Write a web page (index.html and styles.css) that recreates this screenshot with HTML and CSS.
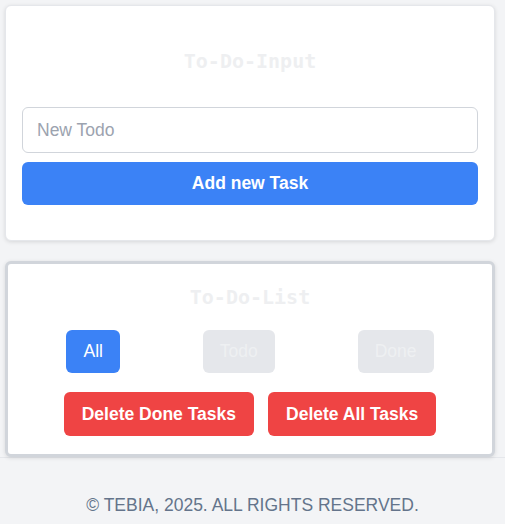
FILE: index.html
```html
<!DOCTYPE html>
<html lang="en">
<head>
<meta charset="utf-8">
<title>To-Do</title>
<link rel="stylesheet" href="styles.css">
</head>
<body>
<main class="page">
  <section class="card card-input">
    <h2 class="card-title title-input">To-Do-Input</h2>
    <input class="todo-input" type="text" placeholder="New Todo">
    <button class="btn btn-primary btn-block">Add new Task</button>
  </section>
  <section class="card card-list">
    <h2 class="card-title title-list">To-Do-List</h2>
    <div class="filters">
      <button class="btn btn-primary">All</button>
      <button class="btn btn-muted">Todo</button>
      <button class="btn btn-muted">Done</button>
    </div>
    <div class="actions">
      <button class="btn btn-danger">Delete Done Tasks</button>
      <button class="btn btn-danger">Delete All Tasks</button>
    </div>
  </section>
</main>
<footer class="footer">© TEBIA, 2025. ALL RIGHTS RESERVED.</footer>
</body>
</html>
```
FILE: styles.css
```css
* { box-sizing: border-box; }
html, body { margin: 0; padding: 0; }
body {
  background: #f3f4f6;
  font-family: "Liberation Sans", Arial, sans-serif;
  height: 524px;
  overflow: hidden;
}
.page {
  padding: 5px 10px 0 5px;
  display: flex;
  flex-direction: column;
  gap: 20px;
}
.card {
  background: #ffffff;
  border-radius: 6px;
  box-shadow: 0 1px 4px rgba(0, 0, 0, 0.12);
}
.card-input {
  border: 1px solid #e5e7eb;
  padding: 16px 16px 35px;
  display: flex;
  flex-direction: column;
}
.card-list {
  border: 3px solid #d1d5db;
  padding: 19px 17px 18px;
  display: flex;
  flex-direction: column;
}
.card-title {
  margin: 0;
  font-family: "DejaVu Sans Mono", monospace;
  font-weight: bold;
  font-size: 20px;
  line-height: 28px;
  text-align: center;
  color: #eeeff1;
}
.title-input { margin: 25px 0 32px; }
.title-list { margin: 0 0 19px; }
.todo-input {
  height: 46px;
  border: 1px solid #d1d5db;
  border-radius: 6px;
  padding: 0 14px;
  font-family: "Liberation Sans", Arial, sans-serif;
  font-size: 17.5px;
  color: #111827;
  outline: none;
  margin: 0 0 9px;
}
.todo-input::placeholder { color: #9ca3af; }
.btn {
  border: none;
  border-radius: 6px;
  height: 43px;
  padding: 0 17px;
  font-family: "Liberation Sans", Arial, sans-serif;
  font-size: 17.5px;
  color: #ffffff;
  cursor: pointer;
}
.btn-block { width: 100%; font-weight: bold; }
.btn-primary { background: #3b82f6; }
.btn-muted { background: #e5e7eb; color: #eef0f2; }
.btn-danger { background: #ef4444; font-weight: bold; height: 44px; padding: 0 18px; }
.filters {
  display: flex;
  justify-content: space-around;
  margin-bottom: 19px;
}
.actions {
  display: flex;
  justify-content: center;
  gap: 14px;
}
.footer {
  border-top: 1px solid #e5e7eb;
  padding-top: 35px;
  text-align: center;
  font-size: 17.5px;
  line-height: 25px;
  color: #64748b;
}
```
